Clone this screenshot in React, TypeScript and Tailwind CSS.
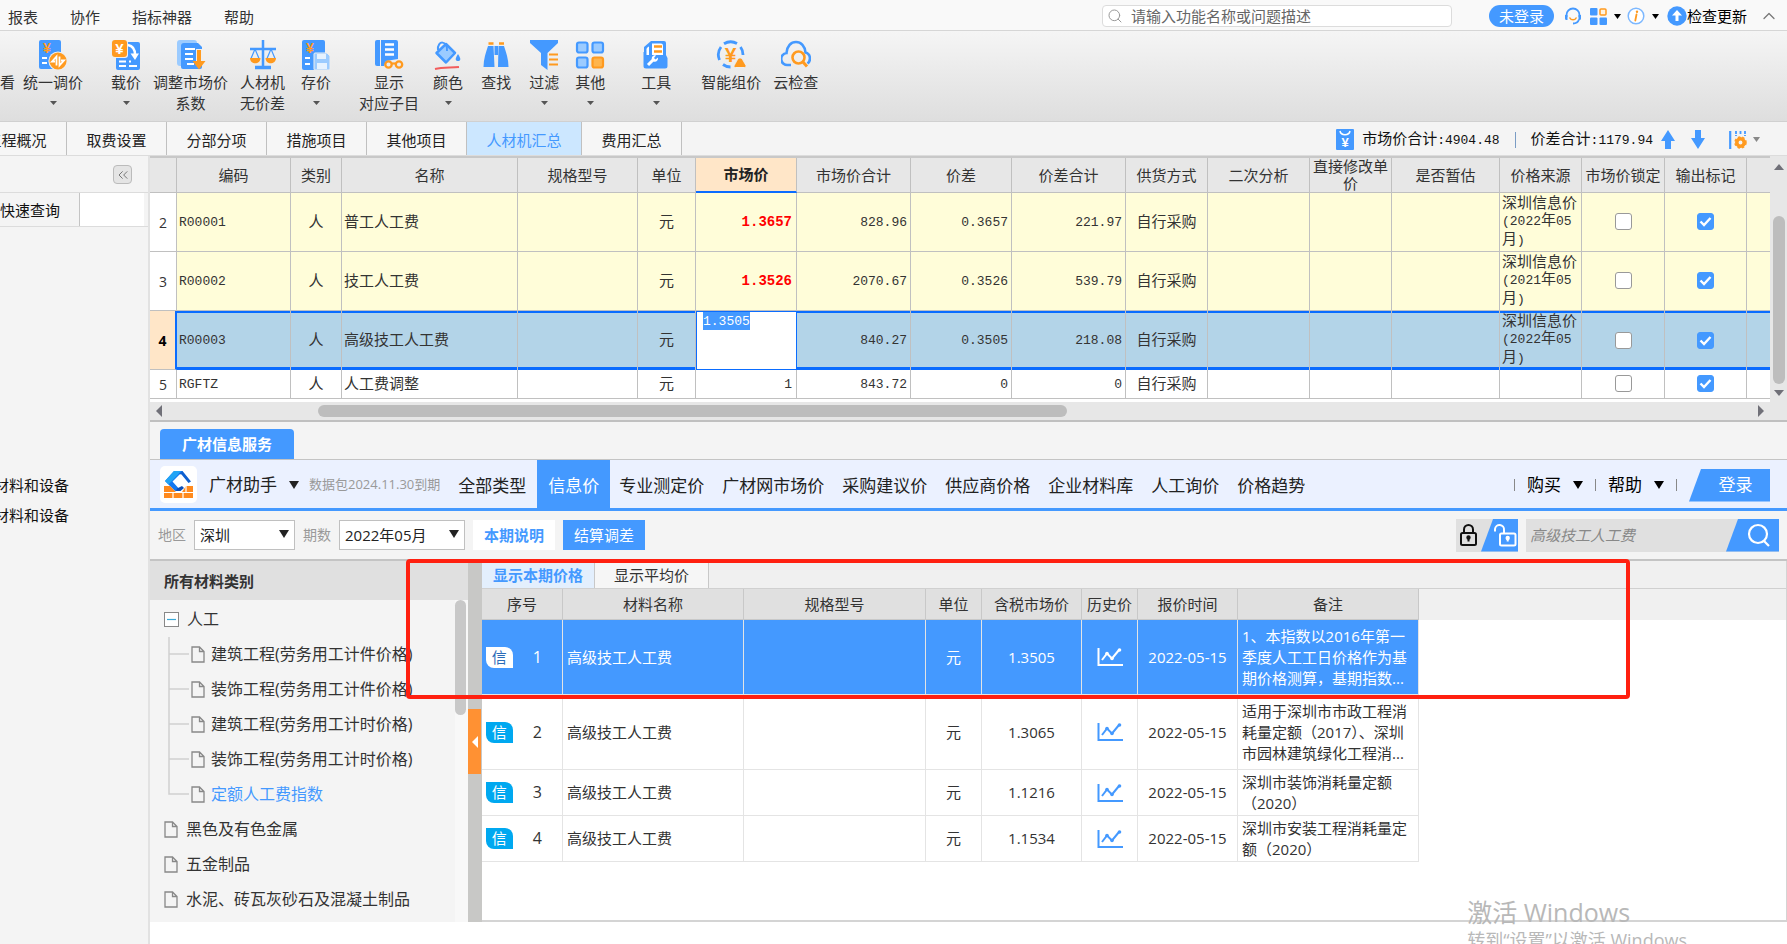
import React from "react";
import clsx from "clsx";
import { ChevronsLeft, ChevronUp, Search } from "lucide-react";

const BLUE = "#4499ff";
const ORANGE = "#ff9a1f";
const LIGHT = "#9bcbff";

/* ---------- small drawings ---------- */

function Caret({ className }: { className?: string }) {
  return (
    <svg viewBox="0 0 10 8" preserveAspectRatio="none" aria-hidden="true" className={clsx("shrink-0", className)}>
      <path d="M0 0H10L5 8Z" fill="currentColor" />
    </svg>
  );
}

function SideCaret({ left, className }: { left?: boolean; className?: string }) {
  return (
    <svg viewBox="0 0 6 12" preserveAspectRatio="none" aria-hidden="true" className={clsx("shrink-0", className)}>
      <path d={left ? "M6 0v12L0 6Z" : "M0 0v12L6 6Z"} fill="currentColor" />
    </svg>
  );
}

function Yen({ x, y, size, fill }: { x: number; y: number; size: number; fill: string }) {
  return (
    <text
      x={x}
      y={y}
      fontSize={size}
      fill={fill}
      fontWeight="700"
      textAnchor="middle"
      fontFamily="'Liberation Sans', sans-serif"
    >
      ¥
    </text>
  );
}

const icons = {
  unify: (
    <>
      <rect x="1" y="0" width="22" height="29" rx="2" fill={BLUE} />
      <Yen x={9} y={13} size={14} fill={ORANGE} />
      <path d="M4 18h5M4 23h5" stroke="#fff" strokeWidth="2" />
      <circle cx="20" cy="21" r="9.6" fill="#eee" />
      <circle cx="20" cy="21" r="8.6" fill={ORANGE} />
      <path d="M18.500 25.500v-9l-4.500 5h3M21.500 16.500v9l4.500-5h-3" stroke="#fff" strokeWidth="1.800" fill="none" />
    </>
  ),
  load: (
    <>
      <rect x="5" y="2" width="24" height="28" rx="2" fill={BLUE} />
      <path d="M17 5c6 1 7 6 7 10" stroke="#fff" strokeWidth="2.500" fill="none" />
      <path d="M19.500 13.500h8.500L24 20Z" fill="#fff" />
      <path d="M8 21.500h7M8 26h7M18 21.500h2M18 26h8" stroke="#fff" strokeWidth="2" />
      <rect x="0" y="0" width="17" height="18" rx="3" fill="#eee" />
      <rect x="1" y="0" width="15" height="17" rx="3" fill={ORANGE} />
      <Yen x={8.5} y={14} size={15} fill="#fff" />
    </>
  ),
  adjust: (
    <>
      <rect x="1" y="0" width="20" height="26" rx="3" fill={LIGHT} />
      <path d="M8 3h14l4 4v20a2 2 0 0 1-2 2H7a2 2 0 0 1-2-2V6a3 3 0 0 1 3-3Z" fill={BLUE} />
      <path d="M9 9h10M9 14h8M9 19h8M11 24h7" stroke="#fff" strokeWidth="2.200" />
      <path d="M23 9v13" stroke="#eee" strokeWidth="6" />
      <path d="M23 10v12" stroke={ORANGE} strokeWidth="4" />
      <path d="M16.500 21h13L23 29.500Z" fill={ORANGE} />
    </>
  ),
  scales: (
    <>
      <path d="M15 0v27M2 9h26" stroke={BLUE} strokeWidth="2.500" />
      <path d="M7 27.500h16" stroke={BLUE} strokeWidth="3.500" />
      <path d="M7 9 3 18.500M7 9l4 9.500M23 9l-4 9.500M23 9l4 9.500" stroke={BLUE} strokeWidth="1.200" fill="none" />
      <path d="M2 18h10.500c0 7-10.500 7-10.500 0ZM17.500 18H28c0 7-10.500 7-10.500 0Z" fill={ORANGE} />
    </>
  ),
  save: (
    <>
      <rect x="1" y="0" width="23" height="30" rx="2" fill={BLUE} />
      <Yen x={9} y={13} size={14} fill={ORANGE} />
      <path d="M4 18h5M4 24h5" stroke="#fff" strokeWidth="2" />
      <path d="M14 13h12l3 3v13a1 1 0 0 1-1 1H14a1 1 0 0 1-1-1V14a1 1 0 0 1 1-1Z" fill={LIGHT} stroke="#eee" />
      <path d="M16 14h9v5h-9ZM16 23h10v6H16Z" fill="#e6f2ff" />
    </>
  ),
  book: (
    <>
      <path d="M1 2a2 2 0 0 1 2-2h3v26H3a2 2 0 0 1-2-2Z" fill={BLUE} />
      <path d="M7 0h15a2 2 0 0 1 2 2v17l-6 1-6 1-2 5H7Z" fill={BLUE} />
      <path d="M11 4.500h9M11 9.500h9M11 14.500h9" stroke="#fff" strokeWidth="2.400" />
      <circle cx="14.500" cy="24.500" r="3.200" stroke={ORANGE} strokeWidth="2.300" fill="none" />
      <circle cx="25" cy="24.500" r="3.200" stroke={ORANGE} strokeWidth="2.300" fill="none" />
      <path d="M17.500 23.500h4.500" stroke={ORANGE} strokeWidth="2.200" />
    </>
  ),
  bucket: (
    <>
      <path d="m13 4 9 9-9 9.500-9.500-9.500Z" fill={LIGHT} stroke={BLUE} strokeWidth="2.500" strokeLinejoin="round" />
      <path d="M5 10c-1-10 10-10 9 1" stroke={BLUE} strokeWidth="2" fill="none" />
      <path d="M25 14c4 6 2 7 0 7s-4-1 0-7Z" fill={BLUE} />
      <path d="M2 29c8-2 16-1 24-2" stroke="#f25c5c" strokeWidth="2" fill="none" />
    </>
  ),
  find: (
    <>
      <path d="M7.500 3.500h5M18 3.500h5" stroke={ORANGE} strokeWidth="2.500" />
      <path d="M7 6h5.500l1 21H2.500c0-8 2.500-15 4.500-21ZM17.500 6H23c2 6 4.500 13 4.500 21H17Z" fill={BLUE} />
      <path d="M13.500 6h3.500v9h-3.500Z" fill={BLUE} />
    </>
  ),
  filter: (
    <>
      <path d="M1 0h28v3L18.500 13v17L12 25V13L1 3Z" fill={BLUE} />
      <path d="M20 14.500h9M20 19.500h9M20 24.500h9" stroke={ORANGE} strokeWidth="2.200" />
    </>
  ),
  others: (
    <>
      <g fill={LIGHT} stroke={BLUE} strokeWidth="2.200">
        <rect x="2" y="2.500" width="10.500" height="10" rx="2" />
        <rect x="17.500" y="2.500" width="10.500" height="10" rx="2" />
        <rect x="2" y="17.500" width="10.500" height="10" rx="2" />
      </g>
      <rect x="17.500" y="17.500" width="10.500" height="10" rx="2" fill="#ffb54d" stroke={ORANGE} strokeWidth="2.200" />
    </>
  ),
  tools: (
    <>
      <path d="M3 12V7l7-6h13a2 2 0 0 1 2 2v12l1.500 3v8a2.500 2.500 0 0 1-2.500 2.500H5A2.500 2.500 0 0 1 2.500 26V12Z" fill={BLUE} />
      <path d="M11 3.500h9a2 2 0 0 1 2 2V15h-11Z" fill="#fff" />
      <path d="M13 6.500h8M13 11.500h8" stroke={ORANGE} strokeWidth="2.400" />
      <path d="M5.500 9.500c0-1.500 1-2.500 2.500-3V15H5.500Z" fill="#fff" />
      <path d="m7 25 6-6" stroke="#fff" strokeWidth="3" />
      <path d="M11 20c-1-3 1.500-5.500 4-4.500l-2 2.500 1.500 1.500 2.500-2c.5 3-2 5-4.500 4Z" fill="#fff" />
    </>
  ),
  smart: (
    <>
      <g stroke={BLUE} strokeWidth="2.800" fill="none">
        <path d="M3.500 20A13 13 0 0 1 5 7M8 3.800A13 13 0 0 1 21 3.500M24.500 7A13 13 0 0 1 27 15M7 24.500A13 13 0 0 0 14.500 27" />
      </g>
      <Yen x={14.5} y={22} size={21} fill={ORANGE} />
      <path d="M24 18c2 0 2.500 1.500 6 7.500 .5 1-.5 2-1.500 2H19.500c-1.500 0-2-1-1.300-2C21.500 19.500 22 18 24 18Z" fill={ORANGE} stroke="#eee" />
    </>
  ),
  cloud: (
    <>
      <path d="M10 25H7A6 6 0 0 1 5.500 13C6 6 10 2 15 2s9 4 9.500 10.500C30 14 30 21 26.500 23.500" stroke={BLUE} strokeWidth="2.600" fill="none" />
      <circle cx="17.500" cy="17.500" r="6" stroke={ORANGE} strokeWidth="2.600" fill="none" />
      <path d="m22 22 4 4.500" stroke={ORANGE} strokeWidth="3" />
    </>
  ),
};

type Tool = {
  lines: string[];
  icon?: keyof typeof icons;
  menu?: boolean;
  gap: string;
};

const tools: Tool[] = [
  { lines: ["查看"], gap: "-ml-[15px]" },
  { lines: ["统一调价"], icon: "unify", menu: true, gap: "ml-2" },
  { lines: ["载价"], icon: "load", menu: true, gap: "ml-7" },
  { lines: ["调整市场价", "系数"], icon: "adjust", gap: "ml-3" },
  { lines: ["人材机", "无价差"], icon: "scales", gap: "ml-3" },
  { lines: ["存价"], icon: "save", menu: true, gap: "ml-4" },
  { lines: ["显示", "对应子目"], icon: "book", gap: "ml-7" },
  { lines: ["颜色"], icon: "bucket", menu: true, gap: "ml-3.5" },
  { lines: ["查找"], icon: "find", gap: "ml-4.5" },
  { lines: ["过滤"], icon: "filter", menu: true, gap: "ml-4.5" },
  { lines: ["其他"], icon: "others", menu: true, gap: "ml-4" },
  { lines: ["工具"], icon: "tools", menu: true, gap: "ml-9" },
  { lines: ["智能组价"], icon: "smart", gap: "ml-7.5" },
  { lines: ["云检查"], icon: "cloud", gap: "ml-3" },
];

/* ---------- top of the window ---------- */

function MenuBar() {
  return (
    <header className="flex h-[31px] shrink-0 items-center border-b border-[#d6d6d6] bg-[#f9f9f9] px-2 pt-0.5 text-[#333]">
      <nav aria-label="菜单" className="flex gap-8 pt-0.5">
        {["报表", "协作", "指标神器", "帮助"].map((m) => (
          <button key={m} type="button">
            {m}
          </button>
        ))}
      </nav>
      <label className="ml-auto flex h-[22px] w-[350px] items-center gap-2 rounded-sm border border-[#dcdcdc] bg-white pl-1">
        <Search size={16} color="#999" strokeWidth={1.5} />
        <input
          aria-label="搜索功能"
          placeholder="请输入功能名称或问题描述"
          className="min-w-0 flex-1 bg-transparent outline-none placeholder:text-[#666]"
        />
      </label>
      <button type="button" className="ml-[37px] h-[22px] w-[65px] rounded-full bg-[#4499ff] leading-[20px] text-white">
        未登录
      </button>
      <button type="button" aria-label="客服" className="ml-2.5">
        <svg width="18" height="18" viewBox="0 0 18 18" fill="none">
          <path d="M2.500 10V8a6.500 6.500 0 0 1 13 0v2" stroke={BLUE} strokeWidth="1.800" />
          <path d="M1 8h2.500v5H2.500A1.500 1.500 0 0 1 1 11.500ZM17 8h-2.500v5h1a1.500 1.500 0 0 0 1.500-1.500Z" fill={BLUE} />
          <path d="M5.500 10.500c1.500 3 5.500 3 7 0" stroke={ORANGE} strokeWidth="1.500" />
          <path d="M15 12.500c-1 3-3 4-6 4" stroke={BLUE} strokeWidth="1.800" />
        </svg>
      </button>
      <button type="button" aria-label="应用" className="ml-2 flex items-center gap-[7px]">
        <svg width="17" height="17" viewBox="0 0 17 17">
          <rect x="0" y="0" width="7.500" height="7.500" rx="1" fill={BLUE} />
          <rect x="10" y="1" width="6" height="6" rx="1" fill="#fff3e0" stroke={ORANGE} strokeWidth="1.500" />
          <rect x="0" y="9.500" width="7.500" height="7.500" rx="1" fill={BLUE} />
          <rect x="9.500" y="9.500" width="7.500" height="7.500" rx="1" fill={BLUE} />
        </svg>
        <Caret className="h-[5px] w-[7px] text-black" />
      </button>
      <button type="button" aria-label="信息" className="ml-1.5 flex items-center gap-[7px]">
        <svg width="18" height="18" viewBox="0 0 18 18">
          <circle cx="9" cy="9" r="7.800" fill="#fff" stroke="#7db8ff" strokeWidth="1.500" />
          <path d="M9.500 7.500 8.300 13.500" stroke={ORANGE} strokeWidth="1.800" strokeLinecap="round" />
          <circle cx="10" cy="4.700" r="1.200" fill={ORANGE} />
        </svg>
        <Caret className="h-[5px] w-[7px] text-black" />
      </button>
      <button type="button" className="ml-2 flex items-center text-black">
        <svg width="20" height="20" viewBox="0 0 20 20">
          <circle cx="10" cy="10" r="9.700" fill={BLUE} />
          <path d="m10 4 5 5.500h-3.500V15h-3V9.500H5Z" fill="#fff" />
        </svg>
        检查更新
      </button>
      <button type="button" aria-label="收起" className="ml-3">
        <ChevronUp size={20} color="#777" strokeWidth={1.5} />
      </button>
    </header>
  );
}

function Ribbon() {
  return (
    <div className="flex h-[91px] shrink-0 items-start border-b border-[#d0d0d0] bg-linear-to-b from-[#f5f5f5] to-[#dedede] pt-[9px] text-[#333]">
      {tools.map((t) => (
        <button
          key={t.lines[0]}
          type="button"
          className={clsx("flex shrink-0 flex-col items-center leading-[21px]", t.gap)}
        >
          <svg width="30" height="30" viewBox="0 0 30 30" fill="none" className="mb-[2px]">
            {t.icon && icons[t.icon]}
          </svg>
          {t.lines.map((l) => (
            <span key={l}>{l}</span>
          ))}
          {t.menu && <Caret className="mt-[8px] h-[4px] w-[7px] text-[#555]" />}
        </button>
      ))}
    </div>
  );
}

const tabs = ["工程概况", "取费设置", "分部分项", "措施项目", "其他项目", "人材机汇总", "费用汇总"];

function Num({ children }: { children: React.ReactNode }) {
  return <span className="font-['Liberation_Mono',monospace] text-[13px]">{children}</span>;
}

function TabBar() {
  return (
    <div className="flex h-[34px] shrink-0 overflow-hidden border-b border-[#dcdcdc] bg-[#f4f4f4]">
      <nav aria-label="页签" className="-ml-[33px] flex text-[#222]">
        {tabs.map((t) => (
          <button
            key={t}
            type="button"
            className={clsx(
              "border-r border-[#c0c0c0] pt-0.5",
              t === "人材机汇总" ? "w-[115px] bg-[#cce7ff] text-[#4499ff]" : "w-[100px] bg-[#f6f6f6]"
            )}
          >
            {t}
          </button>
        ))}
      </nav>
      <div className="ml-auto flex items-center pt-0.5 pr-[27px] text-[#111]">
        <svg width="18" height="21" viewBox="0 0 18 21" className="mr-2">
          <rect width="18" height="21" rx="1" fill={BLUE} />
          <path d="M4 2c1 5 9 5 10 0" stroke="#fff" strokeWidth="1.500" fill="none" />
          <Yen x={9} y={18} size={13} fill="#fff" />
        </svg>
        <span>
          市场价合计<Num>:4904.48</Num>
        </span>
        <i className="mx-[15px] h-4 w-px bg-[#7a9cc4]" />
        <span>
          价差合计<Num>:1179.94</Num>
        </span>
        <button type="button" aria-label="上移" className="ml-2">
          <svg width="14" height="20" viewBox="0 0 14 20">
            <path d="m7 0 7 11h-4v8H4v-8H0Z" fill={BLUE} />
          </svg>
        </button>
        <button type="button" aria-label="下移" className="ml-4">
          <svg width="14" height="20" viewBox="0 0 14 20">
            <path d="m7 19 7-11h-4V0H4v8H0Z" fill={BLUE} />
          </svg>
        </button>
        <button type="button" aria-label="列设置" className="ml-6 flex items-center gap-[6px]">
          <svg width="18" height="20" viewBox="0 0 18 20" fill="none">
            <path d="M1.200 1v18" stroke={BLUE} strokeWidth="2.200" />
            <path d="M7 1v5M11.500 1v3M16 1v5" stroke={BLUE} strokeWidth="1.800" strokeDasharray="3 1" />
            <circle cx="11.500" cy="12.500" r="3.700" stroke={ORANGE} strokeWidth="3.500" />
            <circle cx="11.500" cy="12.500" r="5.500" stroke={ORANGE} strokeWidth="1.500" strokeDasharray="2.500 2" />
          </svg>
          <Caret className="h-[5px] w-[7px] text-[#888]" />
        </button>
      </div>
    </div>
  );
}

function Sidebar() {
  return (
    <aside className="flex w-[150px] shrink-0 flex-col overflow-hidden border-r-2 border-[#e2e2e2] bg-[#f4f4f4] whitespace-nowrap text-[#111]">
      <div className="flex h-9 items-end justify-end pr-4 pb-2">
        <button
          type="button"
          aria-label="折叠"
          className="flex size-[19px] items-center justify-center rounded-sm border border-[#bbb] bg-[#e4e4e4]"
        >
          <ChevronsLeft size={16} color="#777" strokeWidth={1.5} />
        </button>
      </div>
      <div className="flex h-[35px] border-y border-[#dcdcdc]">
        <button type="button" className="w-[80px] shrink-0 border-r border-[#c4c4c4] text-left">
          快速查询
        </button>
        <div className="mr-1 flex-1 bg-white" />
      </div>
      <ul className="mt-[243px] -ml-1.5 leading-[30px]">
        <li>材料和设备</li>
        <li>材料和设备</li>
      </ul>
    </aside>
  );
}

/* ---------- summary table ---------- */

const cols = [
  "w-[27px]", "w-[114px]", "w-[51px]", "w-[176px]", "w-[120px]", "w-[58px]", "w-[101px]", "w-[114px]", "w-[101px]",
  "w-[114px]", "w-[82px]", "w-[102px]", "w-[82px]", "w-[108px]", "w-[82px]", "w-[83px]", "w-[82px]", "",
];

const heads = [
  "", "编码", "类别", "名称", "规格型号", "单位", "市场价", "市场价合计", "价差",
  "价差合计", "供货方式", "二次分析", "直接修改单价", "是否暂估", "价格来源", "市场价锁定", "输出标记", "",
];

type Row = {
  no: number;
  code: string;
  name: string;
  price: string;
  total: string;
  diff: string;
  diffTotal: string;
  source?: string;
  state: "marked" | "active" | "plain";
};

const rows: Row[] = [
  { no: 2, code: "R00001", name: "普工人工费", price: "1.3657", total: "828.96", diff: "0.3657", diffTotal: "221.97", source: "2022", state: "marked" },
  { no: 3, code: "R00002", name: "技工人工费", price: "1.3526", total: "2070.67", diff: "0.3526", diffTotal: "539.79", source: "2021", state: "marked" },
  { no: 4, code: "R00003", name: "高级技工人工费", price: "1.3505", total: "840.27", diff: "0.3505", diffTotal: "218.08", source: "2022", state: "active" },
  { no: 5, code: "RGFTZ", name: "人工费调整", price: "1", total: "843.72", diff: "0", diffTotal: "0", state: "plain" },
];

function Tick({ label, checked }: { label: string; checked?: boolean }) {
  return (
    <span className="relative inline-block size-[17px] align-middle">
      <input
        type="checkbox"
        aria-label={label}
        defaultChecked={checked}
        className="peer block size-[17px] appearance-none rounded-[3px] border border-[#999] bg-white checked:border-[#4499ff] checked:bg-[#4499ff]"
      />
      <svg viewBox="0 0 17 17" className="pointer-events-none absolute inset-0 hidden peer-checked:block">
        <path d="m3.500 8.500 3.500 3.500 6.500-7" stroke="#fff" strokeWidth="2.400" fill="none" />
      </svg>
    </span>
  );
}

function SummaryTable() {
  return (
    <div className="flex shrink-0 border-b-2 border-[#c0c0c0]">
      <div className="min-w-0 flex-1 bg-white">
        <table className="w-full table-fixed border-separate border-spacing-0 border-t-2 border-[#c8c8c8] leading-[17px] text-[#333]">
          <colgroup>
            {cols.map((c, i) => (
              <col key={i} className={c} />
            ))}
          </colgroup>
          <thead>
            <tr className="h-[35px]">
              {heads.map((h, i) => (
                <th
                  key={i}
                  className={clsx(
                    "border-r border-b p-0",
                    i === heads.length - 1 && "border-r-0",
                    h === "市场价"
                      ? "border-r-[#c0c0c0] border-b-2 border-b-[#0a6cff] bg-[#ffe6c8] font-bold text-[#222]"
                      : "border-[#c0c0c0] bg-[#e7e7e7] font-normal"
                  )}
                >
                  {h}
                </th>
              ))}
            </tr>
          </thead>
          <tbody>
            {rows.map((r) => {
              const active = r.state === "active";
              const cell = clsx(
                "border-r border-[#c0c0c0] p-0 pb-0.5",
                r.state === "marked" && "border-b bg-[#fffdd9]",
                active && "border-b-0 bg-[#b3d4e8] shadow-[inset_0_2px_0_#0a6cff,inset_0_-3px_0_#0a6cff]",
                r.state === "plain" && "border-b bg-white"
              );
              return (
                <tr key={r.no} className={r.state === "plain" ? "h-[29px]" : "h-[59px]"}>
                  <td
                    className={clsx(
                      "border-r border-b border-[#c0c0c0] p-0 text-center text-[14px]",
                      active ? "border-r-2 border-r-[#0a6cff] bg-[#ffe6c8] font-bold text-black" : "bg-white"
                    )}
                  >
                    {r.no}
                  </td>
                  <td className={clsx(cell, "pl-0.5")}>
                    <Num>{r.code}</Num>
                  </td>
                  <td className={clsx(cell, "text-center")}>人</td>
                  <td className={clsx(cell, "pl-0.5")}>{r.name}</td>
                  <td className={cell} />
                  <td className={clsx(cell, "text-center")}>元</td>
                  {active ? (
                    <td className="border border-[#0a6cff] bg-white p-0 pl-[6px] align-top">
                      <input
                        aria-label="市场价"
                        defaultValue={r.price}
                        className="block h-[18px] w-[47px] bg-[#4499ff] font-['Liberation_Mono',monospace] text-[13px] text-white outline-none"
                      />
                    </td>
                  ) : (
                    <td className={clsx(cell, "pr-1 text-right", r.state === "marked" && "font-bold text-[#ff0000]")}>
                      {r.state === "marked" ? (
                        <span className="font-['Liberation_Mono',monospace] text-[14px]">{r.price}</span>
                      ) : (
                        <Num>{r.price}</Num>
                      )}
                    </td>
                  )}
                  {[r.total, r.diff, r.diffTotal].map((v, i) => (
                    <td key={i} className={clsx(cell, "pr-[3px] text-right")}>
                      <Num>{v}</Num>
                    </td>
                  ))}
                  <td className={clsx(cell, "text-center")}>自行采购</td>
                  <td className={cell} />
                  <td className={cell} />
                  <td className={cell} />
                  <td className={clsx(cell, "pl-0.5 whitespace-nowrap")}>
                    {r.source && (
                      <>
                        深圳信息价
                        <br />
                        <Num>({r.source}</Num>年<Num>05</Num>
                        <br />月<Num>)</Num>
                      </>
                    )}
                  </td>
                  <td className={clsx(cell, "text-center")}>
                    <Tick label="市场价锁定" />
                  </td>
                  <td className={clsx(cell, "text-center")}>
                    <Tick label="输出标记" checked />
                  </td>
                  <td className={clsx(cell, "border-r-0")} />
                </tr>
              );
            })}
          </tbody>
        </table>
        <div className="mt-[3px] flex h-[18px] items-center bg-[#e7e7e7] px-1.5 text-[#707078]">
          <SideCaret left className="h-[12px] w-[6px]" />
          <div className="flex flex-1 px-[156px]">
            <div className="h-[12px] w-7/12 rounded-full bg-[#bdbdbd]" />
          </div>
          <SideCaret className="h-[12px] w-[6px]" />
        </div>
      </div>
      <div className="flex w-[17px] flex-col items-center bg-[#e7e7e7] pt-2 text-[#707078]">
        <Caret className="h-[6px] w-[10px] rotate-180" />
        <div className="mt-[46px] mb-1.5 w-[12px] flex-1 rounded-full bg-[#bdbdbd]" />
        <Caret className="mb-[24px] h-[6px] w-[10px]" />
      </div>
    </div>
  );
}

/* ---------- information service ---------- */

const serviceTabs = ["专业测定价", "广材网市场价", "采购建议价", "供应商价格", "企业材料库", "人工询价", "价格趋势"];

function ServiceHeader() {
  return (
    <>
      <div className="flex h-[38px] shrink-0 items-end border-b border-[#c4c4c4] bg-[#f4f4f4] pl-[10px]">
        <button type="button" className="h-[30px] rounded-t-sm bg-[#4499ff] px-[22px] font-bold text-white">
          广材信息服务
        </button>
      </div>
      <div className="flex h-[51px] shrink-0 items-center border-b-[3px] border-[#4499ff] bg-[#ebf1ff] pr-[17px] pl-[10px] text-[17px] whitespace-nowrap text-[#222]">
        <svg width="37" height="37" viewBox="0 0 37 37" className="shrink-0">
          <rect width="37" height="37" rx="5" fill="#fff" />
          <path d="M14 5h9L12.500 15.500 21 25h-6L5 15Z" fill="#1478f0" />
          <path d="M14 5 5 15l3.500 3.500L18.500 8 21 5Z" fill="#22a4f5" />
          <path d="M19 8l3.500-3L31 15.500 28.500 17l-7-8.500Z" fill="#0d5fd0" />
          <path d="m17 22.500 5-2.500 2 2-3.500 3H16Z" fill="#0d4fb8" />
          <path d="M4 20h6l6 6h6l4-6h7v12H4Z" fill="#ff8a1e" />
          <path d="M4 26.500h29M13 26.500V32M23 26.500V32M26 20v6" stroke="#fff" strokeWidth="1.200" />
        </svg>
        <button type="button" className="ml-3 flex items-center gap-[12px] pt-0.5">
          广材助手
          <Caret className="h-[8px] w-[10px]" />
        </button>
        <span className="ml-[10px] text-[13px] text-[#999]">数据包2024.11.30到期</span>
        <nav aria-label="价格类型" className="ml-[12px] flex self-stretch">
          <button type="button" className="pt-1 pr-[11px] pl-[6px]">全部类型</button>
          <button type="button" className="-mb-[3px] bg-[#4499ff] px-[11px] text-white">
            信息价
          </button>
          {serviceTabs.map((t) => (
            <button key={t} type="button" className="px-[9px] pt-1 first-of-type:pl-2">
              {t}
            </button>
          ))}
        </nav>
        <div className="ml-auto flex items-center gap-[12px] pt-0.5 text-black">
          <i className="h-[12px] w-px bg-[#888]" />
          <button type="button" className="flex items-center gap-[12px]">
            购买 <Caret className="h-[8px] w-[10px]" />
          </button>
          <i className="h-[12px] w-px bg-[#888]" />
          <button type="button" className="flex items-center gap-[12px]">
            帮助 <Caret className="h-[8px] w-[10px]" />
          </button>
          <i className="h-[12px] w-px bg-[#888]" />
          <button
            type="button"
            className="h-[33px] w-[81px] bg-[#4499ff] pl-[12px] text-white [clip-path:polygon(15%_0,100%_0,100%_100%,0_100%)]"
          >
            登录
          </button>
        </div>
      </div>
    </>
  );
}

function Select({ label, value, width }: { label: string; value: string; width: string }) {
  return (
    <label className="flex items-center gap-2 text-[14px] text-[#999]">
      {label}
      <span className={clsx("relative block", width)}>
        <select className="block h-[30px] w-full appearance-none border border-[#c0c0c0] bg-white pl-[5px] text-[15px] text-[#222]">
          <option>{value}</option>
        </select>
        <Caret className="pointer-events-none absolute top-[10px] right-[6px] h-[8px] w-[10px] text-[#222]" />
      </span>
    </label>
  );
}

function FilterBar() {
  return (
    <div className="flex h-[50px] shrink-0 items-center gap-2 border-b-2 border-[#c4c4c4] bg-[#f4f4f4] pr-2 pl-[8px]">
      <Select label="地区" value="深圳" width="w-[101px]" />
      <Select label="期数" value="2022年05月" width="w-[126px]" />
      <button type="button" className="h-[30px] bg-white px-[11px] font-bold text-[#4499ff]">
        本期说明
      </button>
      <button type="button" className="h-[30px] bg-[#4499ff] px-[11px] text-white">
        结算调差
      </button>
      <div className="ml-auto flex h-[33px] w-[62px] bg-[#e0e0e0]">
        <button type="button" aria-label="锁定" className="pl-[3px]">
          <svg width="19" height="24" viewBox="0 0 19 24" fill="none" stroke="#111" strokeWidth="2">
            <rect x="2" y="10" width="15" height="12" rx="1.500" />
            <path d="M5 10V6.500a4.500 4.500 0 0 1 9 0V10" />
            <circle cx="9.500" cy="14.500" r="1.200" fill="#111" />
            <path d="M9.500 15v3.500" />
          </svg>
        </button>
        <button
          type="button"
          aria-label="解锁"
          className="ml-auto flex w-[37px] items-center justify-end bg-[#4499ff] pr-px [clip-path:polygon(33%_0,100%_0,100%_100%,0_100%)]"
        >
          <svg width="24" height="25" viewBox="0 0 24 25" fill="none" stroke="#fff" strokeWidth="2">
            <rect x="7" y="10.500" width="15.500" height="12" rx="1.500" />
            <path d="M11 10.500V7a4.500 4.500 0 0 0-9-1v2.500" />
            <circle cx="14.700" cy="15" r="1.200" fill="#fff" />
            <path d="M14.700 15.500v3" />
          </svg>
        </button>
      </div>
      <div className="flex h-[33px] w-[253px] bg-[#e0e0e0]">
        <input
          aria-label="搜索材料"
          placeholder="高级技工人工费"
          className="min-w-0 flex-1 bg-transparent pl-1 italic outline-none placeholder:text-[#888]"
        />
        <button
          type="button"
          aria-label="搜索"
          className="flex w-[53px] items-center justify-end bg-[#4499ff] pr-2 text-white [clip-path:polygon(23%_0,100%_0,100%_100%,0_100%)]"
        >
          <svg width="24" height="24" viewBox="0 0 24 24" fill="none" stroke="currentColor" strokeWidth="2.200">
            <circle cx="11" cy="11" r="9" />
            <path d="m17 18 5 5" />
          </svg>
        </button>
      </div>
    </div>
  );
}

function Doc() {
  return (
    <svg width="14" height="17" viewBox="0 0 14 17" fill="none" stroke="#888" strokeWidth="1.300" className="shrink-0">
      <path d="M1 1h7.500L13 5.500V16H1ZM8.500 1v4.500H13" />
    </svg>
  );
}

const children = [
  "建筑工程(劳务用工计件价格)",
  "装饰工程(劳务用工计件价格)",
  "建筑工程(劳务用工计时价格)",
  "装饰工程(劳务用工计时价格)",
  "定额人工费指数",
];

function CategoryTree() {
  return (
    <section className="flex w-[318px] shrink-0 flex-col bg-[#f4f4f4]">
      <h2 className="flex h-[39px] shrink-0 items-center bg-[#e0e0e0] pl-[14px] font-bold text-[#333]">所有材料类别</h2>
      <div className="flex min-h-0 flex-1">
        <ul className="min-w-0 flex-1 overflow-hidden pt-0.5 pl-[14px] text-[16px] leading-[35px] whitespace-nowrap text-[#333]">
          <li>
            <button type="button" className="flex items-center gap-2">
              <svg width="15" height="15" viewBox="0 0 15 15">
                <rect x=".5" y=".5" width="14" height="14" fill="#fff" stroke="#888" />
                <path d="M3 7.500h9" stroke="#3aa8d8" strokeWidth="1.200" />
              </svg>
              人工
            </button>
            <ul className="pl-1">
              {children.map((c, i) => (
                <li key={c} className="flex h-[35px] items-center">
                  <svg width="23" height="35" viewBox="0 0 23 35" fill="none" stroke="#d0d0d0" strokeWidth="1.500" className="shrink-0">
                    <path d={i === children.length - 1 ? "M1 0v17h20" : "M1 0v35M1 17h20"} />
                  </svg>
                  <Doc />
                  <button type="button" className={clsx("ml-1.5", c === "定额人工费指数" && "text-[#4499ff]")}>
                    {c}
                  </button>
                </li>
              ))}
            </ul>
          </li>
          {["黑色及有色金属", "五金制品", "水泥、砖瓦灰砂石及混凝土制品"].map((c) => (
            <li key={c}>
              <button type="button" className="flex items-center gap-2">
                <Doc />
                {c}
              </button>
            </li>
          ))}
        </ul>
        <div className="w-[13px] bg-[#f8f8f8]">
          <div className="h-[115px] w-[11px] rounded-full bg-[#c8c8c8]" />
        </div>
      </div>
    </section>
  );
}

const priceCols = ["w-[81px]", "w-[181px]", "w-[182px]", "w-[56px]", "w-[100px]", "w-[56px]", "w-[100px]", "w-[181px]"];
const priceHeads = ["序号", "材料名称", "规格型号", "单位", "含税市场价", "历史价", "报价时间", "备注"];

const prices = [
  { price: "1.3505", note: ["1、本指数以2016年第一", "季度人工工日价格作为基", "期价格测算，基期指数..."] },
  { price: "1.3065", note: ["适用于深圳市市政工程消", "耗量定额（2017）、深圳", "市园林建筑绿化工程消..."] },
  { price: "1.1216", note: ["深圳市装饰消耗量定额", "（2020）"] },
  { price: "1.1534", note: ["深圳市安装工程消耗量定", "额（2020）"] },
];

function PriceTable() {
  return (
    <section className="min-w-0 flex-1 border-r border-b-2 border-[#d4d4d4] bg-white">
      <div className="flex h-[28px] border-b border-[#d0d0d0] bg-[#f0f0f0] text-[#333]">
        <button type="button" className="border-r border-[#c8c8c8] bg-[#e3effd] px-[11px] font-bold text-[#4499ff]">
          显示本期价格
        </button>
        <button type="button" className="border-r border-[#c8c8c8] bg-[#f6f6f6] px-[19px]">
          显示平均价
        </button>
      </div>
      <div className="bg-linear-to-b from-[#f0f0f0] from-[31px] to-white to-[31px]">
        <table className="w-[937px] table-fixed border-separate border-spacing-0 leading-[21px] text-[#333]">
          <colgroup>
            {priceCols.map((c, i) => (
              <col key={i} className={c} />
            ))}
          </colgroup>
          <thead>
            <tr className="h-[31px]">
              {priceHeads.map((h) => (
                <th key={h} className="border-r border-b border-[#c8c8c8] bg-[#e0e0e0] p-0 font-normal">
                  {h}
                </th>
              ))}
            </tr>
          </thead>
          <tbody>
            {prices.map((p, i) => {
              const on = i === 0;
              const cell = clsx("border-r border-b border-[#e4e4e4] p-0", on && "bg-[#4499ff] text-white");
              return (
                <tr key={p.price} className={p.note.length === 3 ? "h-[75px]" : "h-[46px]"}>
                  <td className={cell}>
                    <div className="flex items-center pl-1">
                      <span
                        className={clsx(
                          "flex h-[21px] w-[27px] items-center justify-center rounded-tr-lg rounded-bl-lg",
                          on ? "bg-white text-[#2b6cb8]" : "bg-[#00a8f0] text-white"
                        )}
                      >
                        信
                      </span>
                      <span className="w-[50px] text-center text-[16px]">{i + 1}</span>
                    </div>
                  </td>
                  <td className={clsx(cell, "pl-1")}>高级技工人工费</td>
                  <td className={cell} />
                  <td className={clsx(cell, "text-center")}>元</td>
                  <td className={clsx(cell, "text-center")}>{p.price}</td>
                  <td className={clsx(cell, on ? "text-white" : "text-[#4499ff]")}>
                    <svg width="26" height="20" viewBox="0 0 26 20" fill="none" stroke="currentColor" strokeWidth="2" className="mx-auto">
                      <path d="M1.500 1v17H26M5 13l5-6.500 5 5 7-8.500" />
                      <g fill="currentColor" stroke="none">
                        <circle cx="10" cy="6.500" r="1.800" />
                        <circle cx="15" cy="11.500" r="1.800" />
                        <circle cx="22.500" cy="3" r="1.800" />
                      </g>
                    </svg>
                  </td>
                  <td className={clsx(cell, "text-center")}>2022-05-15</td>
                  <td className={clsx(cell, "pl-1 whitespace-nowrap")}>
                    {p.note.map((n) => (
                      <div key={n}>{n}</div>
                    ))}
                  </td>
                </tr>
              );
            })}
          </tbody>
        </table>
      </div>
    </section>
  );
}

export default function App() {
  return (
    <div className="relative flex h-screen flex-col overflow-hidden bg-white font-['Open_Sans','Noto_Sans_CJK_SC',sans-serif] text-[15px] leading-[20px]">
      <MenuBar />
      <Ribbon />
      <TabBar />
      <div className="flex min-h-0 flex-1">
        <Sidebar />
        <main className="flex min-w-0 flex-1 flex-col">
          <SummaryTable />
          <ServiceHeader />
          <FilterBar />
          <div className="relative mb-[22px] flex min-h-0 flex-1">
            <CategoryTree />
            <div className="flex w-[14px] shrink-0 flex-col bg-[#c8c8c6] pt-[148px]">
              <button type="button" aria-label="收起分类" className="flex h-[65px] w-[13px] items-center justify-center bg-[#ff9133] text-white">
                <SideCaret left className="h-[12px] w-[6px]" />
              </button>
            </div>
            <PriceTable />
            {/* highlight frame over the current price row */}
            <div className="pointer-events-none absolute -top-0.5 right-[157px] left-[256px] h-[140px] rounded-sm border-4 border-[#ff2010]" />
          </div>
        </main>
      </div>
      <div className="pointer-events-none absolute right-[100px] -bottom-[8px] text-[#b8b8b8]">
        <p className="text-[25px] leading-[32px]">激活 Windows</p>
        <p className="text-[18px] leading-[24px]">转到“设置”以激活 Windows</p>
      </div>
    </div>
  );
}
